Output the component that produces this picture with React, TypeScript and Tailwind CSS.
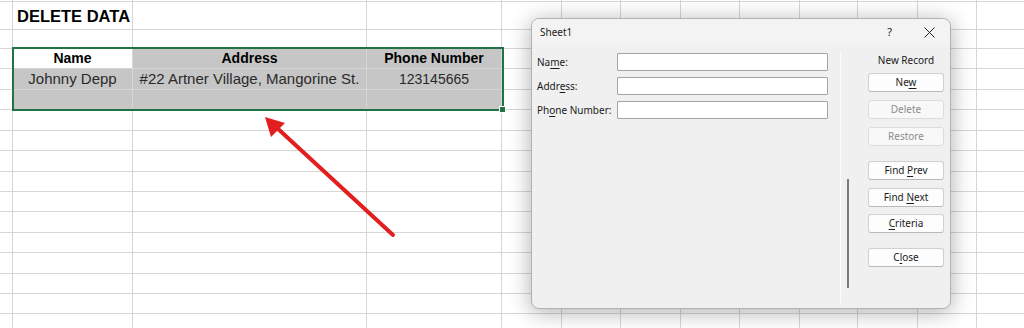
import React from "react";

const COLS = 14;
const ROWS = 17;

function cellContent(r: number, c: number) {
  if (r === 1 && c === 1)
    return (
      <span className="relative z-10 pl-[4px] pt-[2px] text-[16.5px] font-bold text-black whitespace-nowrap">DELETE DATA</span>
    );
  if (r === 3 && c === 1) return <span className="w-full text-center text-[14px] font-bold text-black">Name</span>;
  if (r === 3 && c === 2) return <span className="w-full text-center text-[14px] font-bold text-black">Address</span>;
  if (r === 3 && c === 3) return <span className="w-full text-center text-[14px] font-bold text-black">Phone Number</span>;
  if (r === 4 && c === 1) return <span className="w-full text-center text-[15px] text-[#2a2a2a]">Johnny Depp</span>;
  if (r === 4 && c === 2)
    return <span className="w-full text-center text-[15px] text-[#2a2a2a] whitespace-nowrap">#22 Artner Village, Mangorine St.</span>;
  if (r === 4 && c === 3) return <span className="w-full text-center text-[14px] text-[#2a2a2a]">123145665</span>;
  return null;
}

function Btn({ children, disabled }: { children: React.ReactNode; disabled?: boolean }) {
  return (
    <div
      className={
        disabled
          ? "h-[19px] w-[76px] rounded-[3px] border border-[#dcdcdc] bg-[#f8f8f8] flex items-center justify-center text-[10px] text-[#8d8d8d]"
          : "h-[19px] w-[76px] rounded-[3px] border border-[#d0d0d0] border-b-[#b9b9b9] bg-[#fdfdfd] flex items-center justify-center text-[10px] text-[#1b1b1b]"
      }
    >
      <span className="whitespace-pre">{children}</span>
    </div>
  );
}

export default function App() {
  const cells: React.ReactNode[] = [];
  for (let r = 0; r < ROWS; r++) {
    for (let c = 0; c < COLS; c++) {
      const inSel = r >= 3 && r <= 5 && c >= 1 && c <= 3;
      const active = r === 3 && c === 1;
      const bg = inSel && !active ? "bg-[#c6c6c6]" : "bg-white";
      cells.push(
        <div
          key={`${r}-${c}`}
          className={`border-r border-b border-[#d6d6d6] ${bg} flex items-center overflow-visible min-w-0`}
        >
          {cellContent(r, c)}
        </div>
      );
    }
  }

  return (
    <div
      className="relative w-[1024px] h-[328px] overflow-hidden bg-white"
      style={{ fontFamily: '"Liberation Sans", Arial, sans-serif' }}
    >
      <div className="grid grid-cols-[13px_120px_234px_135px_60px_59px_60px_59px_60px_58px_60px_59px_60px_59px] grid-rows-[2px_28px_19px_20px_21px_20px_21px_20px_21px_20px_20px_21px_20px_21px_20px_20px_20px]">
        {cells}
      </div>

      {/* selection border */}
      <div className="absolute left-[12px] top-[47px] w-[492px] h-[64px] border-2 border-[#217346] pointer-events-none" />
      <div className="absolute left-[499px] top-[106px] w-[7px] h-[7px] bg-[#217346] border border-white" />

      {/* arrow */}
      <svg className="absolute left-0 top-0 pointer-events-none" width="1024" height="328" viewBox="0 0 1024 328">
        <line x1="393" y1="235" x2="276" y2="127" stroke="#e31e1e" strokeWidth="4" strokeLinecap="round" />
        <polygon points="265,117 285,123 271,137" fill="#e31e1e" />
      </svg>

      {/* dialog */}
      <div
        className="absolute left-[531px] top-[18px] w-[420px] h-[291px] rounded-[8px] border border-[#b2b2b2] bg-[#f0f0f0] shadow-[0_3px_22px_rgba(0,0,0,0.32)] overflow-hidden flex flex-col"
        style={{ fontFamily: '"Noto Sans", "Segoe UI", sans-serif' }}
      >
        <div className="h-[26px] bg-[#f3f3f3] flex items-center pl-[8px] pr-[15px] shrink-0">
          <span className="text-[10px] text-[#1a1a1a]">Sheet1</span>
          <span className="ml-auto text-[11px] text-[#1a1a1a] mr-[32px]">?</span>
          <svg width="11" height="11" viewBox="0 0 11 11">
            <path d="M0.5 0.5 L10.5 10.5 M10.5 0.5 L0.5 10.5" stroke="#222" strokeWidth="1" />
          </svg>
        </div>
        <div className="flex flex-1 pt-[8px]">
          <div className="flex flex-col gap-[6px] pl-[5px]">
            <div className="flex items-center h-[18px]">
              <span className="w-[80px] text-[10px] text-[#1a1a1a]">
                Na<u className="underline-offset-2">m</u>e:
              </span>
              <div className="w-[211px] h-[18px] bg-white border border-[#a4a4a4] rounded-[1px]" />
            </div>
            <div className="flex items-center h-[18px]">
              <span className="w-[80px] text-[10px] text-[#1a1a1a]">
                Addr<u className="underline-offset-2">e</u>ss:
              </span>
              <div className="w-[211px] h-[18px] bg-white border border-[#a4a4a4] rounded-[1px]" />
            </div>
            <div className="flex items-center h-[18px]">
              <span className="w-[80px] text-[10px] text-[#1a1a1a] whitespace-nowrap">
                Ph<u className="underline-offset-2">o</u>ne Number:
              </span>
              <div className="w-[211px] h-[18px] bg-white border border-[#a4a4a4] rounded-[1px]" />
            </div>
          </div>
          <div className="ml-[12px] w-[1px] h-[250px] bg-[#fdfdfd]" />
          <div className="ml-[6px] mt-[126px] w-[2px] h-[109px] bg-[#7a7a7a]" />
          <div className="ml-[19px] w-[76px] flex flex-col">
            <div className="h-[14px] flex items-center justify-center text-[10px] text-[#1a1a1a] whitespace-nowrap">
              New Record
            </div>
            <div className="mt-[6px]">
              <Btn>
                Ne<u className="underline-offset-2">w</u>
              </Btn>
            </div>
            <div className="mt-[8px]">
              <Btn disabled>Delete</Btn>
            </div>
            <div className="mt-[8px]">
              <Btn disabled>Restore</Btn>
            </div>
            <div className="mt-[15px]">
              <Btn>
                {"Find "}
                <u className="underline-offset-2">P</u>rev
              </Btn>
            </div>
            <div className="mt-[8px]">
              <Btn>
                {"Find "}
                <u className="underline-offset-2">N</u>ext
              </Btn>
            </div>
            <div className="mt-[7px]">
              <Btn>
                <u className="underline-offset-2">C</u>riteria
              </Btn>
            </div>
            <div className="mt-[15px]">
              <Btn>
                C<u className="underline-offset-2">l</u>ose
              </Btn>
            </div>
          </div>
        </div>
      </div>
    </div>
  );
}
